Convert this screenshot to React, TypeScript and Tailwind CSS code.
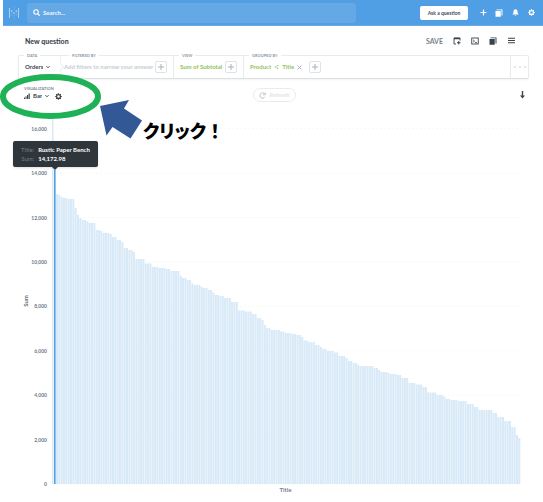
import type { ReactNode } from "react";

// Y axis runs from 0 to 16,000; 2,000 units are 44.4 chart units tall
const TICKS = [16000, 14000, 12000, 10000, 8000, 6000, 4000, 2000, 0];
const BASE = 366;
const yFor = (v: number) => BASE - (v * 44.4) / 2000;

// [start, top] of every step in the sorted bars
const STEPS: [number, number][] = [
  [56, 76], [58, 77], [60, 79], [63, 80], [66, 81], [73, 82], [75, 90], [77, 97], [79, 100],
  [82, 102], [86, 103], [89, 105], [94, 107], [96, 112], [100, 113], [103, 115], [110, 116],
  [112, 119], [117, 122], [120, 124], [123, 130], [127, 132], [132, 134], [135, 141],
  [143, 145.5], [152, 149], [157, 150], [164, 151], [170, 153], [178, 158], [181, 160],
  [187, 162], [190, 165.5], [194, 167], [199, 169], [202, 170], [208, 172], [211, 174.5],
  [214, 177], [218, 178], [224, 180], [230, 184], [237, 192.5], [244, 193.5], [251, 196],
  [256, 200], [261, 202], [263, 207], [266, 210], [269, 212], [279, 213.5], [285, 215],
  [292, 216], [296, 217], [300, 219], [303, 222.5], [308, 224], [314, 227], [319, 229],
  [322, 231], [326, 233], [333, 234.5], [338, 238], [344, 240], [347, 243], [352, 245],
  [356, 247], [360, 248], [373, 250], [377, 252], [380, 254], [386, 255], [389, 256],
  [397, 257], [402, 260], [409, 265], [416, 266.5], [421, 269], [427, 274.5], [437, 277],
  [442, 279], [445, 281], [449, 282], [458, 283], [467, 286], [473, 289], [479, 292],
  [491, 295], [496, 299], [503, 303], [510, 309], [515, 317], [518, 320],
];

const PITCH = 2.335;
const bars = Array.from({ length: 199 }, (_, i) => {
  const x = 56 + i * PITCH;
  const step = STEPS.filter(([start]) => start <= x + 0.5).pop()!;
  return { x, top: step[1] };
});

function Logo() {
  const bright = [
    [0, 0], [4, 0], [0, 1], [1, 1], [3, 1], [4, 1], [0, 2], [2, 2], [4, 2], [0, 3], [4, 3], [0, 4], [4, 4],
  ];
  const dim = [[2, 0], [1, 2], [3, 2], [2, 3], [1, 3], [3, 3], [2, 4], [2, -1], [2, 5]];
  return (
    <svg width="12" height="14" viewBox="0 0 12 14" fill="#fff" aria-hidden="true">
      {bright.map(([c, r]) => (
        <circle key={`b${c}${r}`} cx={1.5 + c * 2.25} cy={3 + r * 2} r="0.7" opacity="0.8" />
      ))}
      {dim.map(([c, r]) => (
        <circle key={`d${c}${r}`} cx={1.5 + c * 2.25} cy={3 + r * 2} r="0.6" opacity="0.3" />
      ))}
    </svg>
  );
}

function Gear({ className }: { className?: string }) {
  return (
    <svg viewBox="0 0 16 16" className={className} fill="none" stroke="currentColor" aria-hidden="true">
      <circle cx="8" cy="8" r="4.4" strokeWidth="2.8" />
      <path
        d="M8 .5v2.3M8 13.2v2.3M.5 8h2.3M13.2 8h2.3M2.7 2.7l1.7 1.7M11.6 11.6l1.7 1.7M2.7 13.3l1.7-1.7M11.6 4.4l1.7-1.7"
        strokeWidth="2.8"
      />
    </svg>
  );
}

function Chevron() {
  return (
    <svg width="4" height="4" viewBox="0 0 8 8" fill="none" stroke="currentColor" strokeWidth="2" aria-hidden="true">
      <path d="M1 2.5l3 3 3-3" />
    </svg>
  );
}

function Copies() {
  return (
    <svg width="8" height="8" viewBox="0 0 16 16" fill="currentColor" aria-hidden="true">
      <path d="M1 4h10.5v11.500H1z" />
      <path d="M3 .8h12v12h-2V2.500H3z" />
    </svg>
  );
}

function IconButton({ label, children }: { label: string; children: ReactNode }) {
  return (
    <button aria-label={label} className="flex size-2 items-center justify-center">
      {children}
    </button>
  );
}

function AddButton({ label }: { label: string }) {
  return (
    <button
      aria-label={label}
      className="flex size-3 shrink-0 items-center justify-center rounded-[2px] border border-[#dfe3e6] text-[#a9b2b9]"
    >
      <svg width="6" height="6" viewBox="0 0 6 6" stroke="currentColor" aria-hidden="true">
        <path d="M3 0v6M0 3h6" />
      </svg>
    </button>
  );
}

function Section({ label, htmlFor, className, children }: {
  label: string;
  htmlFor?: string;
  className?: string;
  children: ReactNode;
}) {
  const labelClass = "absolute -top-[3px] left-[5px] bg-white px-[3px] text-[4px] leading-[5px] font-bold whitespace-nowrap text-[#8b98a3]";
  return (
    <div className={`relative flex items-center ${className ?? ""}`}>
      {htmlFor ? (
        <label htmlFor={htmlFor} className={labelClass}>{label}</label>
      ) : (
        <span className={labelClass}>{label}</span>
      )}
      {children}
    </div>
  );
}

function NavBar() {
  return (
    <header className="ml-[3px] flex h-[26px] items-center border-b border-[#69aae5] bg-[#509ee3] pr-2 text-white">
      <a href="#" aria-label="Home" className="ml-[5px] mr-[7px]">
        <Logo />
      </a>
      <label className="flex h-5 w-[329px] min-w-0 items-center gap-[3px] rounded-[3px] bg-[#64a9e6] pl-[6px]">
        <svg width="7" height="7" viewBox="0 0 14 14" fill="none" stroke="#fff" strokeWidth="2.200" aria-hidden="true">
          <circle cx="6" cy="6" r="4.500" />
          <path d="M9.500 9.500l4 4" />
        </svg>
        <input
          type="text"
          aria-label="Search"
          placeholder="Search..."
          className="min-w-0 flex-1 bg-transparent text-[6px] leading-[8px] font-bold outline-none placeholder:text-white/90"
        />
      </label>
      <div className="ml-auto flex items-center gap-2">
        <button className="mr-[3px] h-[14px] w-12 rounded-[2px] bg-white text-[5px] leading-[8px] font-bold whitespace-nowrap text-[#3f4a5c]">
          Ask a question
        </button>
        <IconButton label="New">
          <svg width="7" height="7" viewBox="0 0 7 7" stroke="#fff" aria-hidden="true">
            <path d="M3.500 .5v6M.5 3.500h6" strokeWidth="1.200" />
          </svg>
        </IconButton>
        <IconButton label="Collections"><Copies /></IconButton>
        <IconButton label="Activity">
          <svg width="7" height="7" viewBox="0 0 14 14" fill="#fff" aria-hidden="true">
            <path d="M7 .5c-3 0-4 2.200-4 4.500 0 3-1 4.500-2.500 6h13C12 9.500 11 8 11 5c0-2.300-1-4.500-4-4.500zM5.500 12h3c0 1-.6 1.700-1.500 1.700S5.500 13 5.500 12z" />
          </svg>
        </IconButton>
        <IconButton label="Settings"><Gear className="size-[7px]" /></IconButton>
      </div>
    </header>
  );
}

function TitleRow() {
  return (
    <div className="flex h-[29px] items-center pr-7 pl-[25px]">
      <h1 className="text-[7px] leading-[10px] font-black text-[#3c464f]">New question</h1>
      <div className="ml-auto flex items-center gap-[10px] text-[#39434b]">
        <button className="text-[7px] leading-[10px] font-bold text-[#74838f]">SAVE</button>
        <IconButton label="Add to dashboard">
          <svg width="8" height="8" viewBox="0 0 16 16" fill="none" stroke="currentColor" strokeWidth="1.800" aria-hidden="true">
            <path d="M6 14H2V2h12v5" />
            <path d="M2 3h12" strokeWidth="3" />
            <path d="M11.500 8v7M8 11.500h7" strokeWidth="2" />
          </svg>
        </IconButton>
        <IconButton label="View SQL">
          <svg width="8" height="8" viewBox="0 0 16 16" fill="none" stroke="currentColor" strokeWidth="1.800" aria-hidden="true">
            <rect x="1.500" y="2" width="13" height="12" />
            <path d="M4.500 6l2.500 2-2.500 2M8 11.200h4" />
          </svg>
        </IconButton>
        <IconButton label="Data reference"><Copies /></IconButton>
        <IconButton label="Menu">
          <svg width="7" height="7" viewBox="0 0 14 14" stroke="currentColor" strokeWidth="2.200" aria-hidden="true">
            <path d="M0 2.500h14M0 7h14M0 11.500h14" />
          </svg>
        </IconButton>
      </div>
    </div>
  );
}

function QueryBar() {
  return (
    <div className="mr-[14px] ml-[18px] flex h-6 rounded-[2px] border border-[#e8eced] border-b-[#dce1e4] text-[6px] leading-[8px] font-bold whitespace-nowrap shadow-xs">
      <Section label="DATA" htmlFor="data" className="w-[41px] pl-[6px] text-[#3c464f]">
        <select id="data" className="appearance-none field-sizing-content bg-transparent pr-[3px] outline-none">
          <option>Orders</option>
        </select>
        <Chevron />
      </Section>
      <svg width="4" height="22" viewBox="0 0 4 22" fill="none" stroke="#e3e7e9" aria-hidden="true">
        <path d="M0 0v7l3.500 4L0 15v7" />
      </svg>
      <Section label="FILTERED BY" className="w-[110px] gap-[2px] border-r border-[#e8eced]">
        <button className="text-[#c6ccd1]">Add filters to narrow your answer</button>
        <AddButton label="Add filter" />
      </Section>
      <Section label="VIEW" className="w-[70px] gap-[3px] border-r border-[#e8eced] pl-[6px]">
        <button className="text-[#93bf62]">Sum of Subtotal</button>
        <AddButton label="Add metric" />
      </Section>
      <Section label="GROUPED BY" className="flex-1 gap-[3px] pl-[6px] text-[#93bf62]">
        <button>Product</button>
        <svg width="5" height="4" viewBox="0 0 8 8" fill="currentColor" aria-hidden="true">
          <circle cx="1.500" cy="4" r="1.200" />
          <circle cx="6.500" cy="1.200" r="1.200" />
          <circle cx="6.500" cy="6.800" r="1.200" />
          <path d="M1.500 4l5-2.800M1.500 4l5 2.800" stroke="currentColor" />
        </svg>
        <button>Title</button>
        <button aria-label="Remove grouping" className="mr-1 text-[#aab3ba]">
          <svg width="5" height="5" viewBox="0 0 5 5" stroke="currentColor" aria-hidden="true">
            <path d="M.5 .5l4 4M4.500 .5l-4 4" />
          </svg>
        </button>
        <AddButton label="Add grouping" />
      </Section>
      <button aria-label="More options" className="flex w-[18px] items-center justify-center border-l border-[#e8eced]">
        <svg width="12" height="2" viewBox="0 0 12 2" fill="#c2c9ce" aria-hidden="true">
          <circle cx="1" cy="1" r="0.800" />
          <circle cx="6" cy="1" r="0.800" />
          <circle cx="11" cy="1" r="0.800" />
        </svg>
      </button>
    </div>
  );
}

function VisualizationRow() {
  return (
    <div className="grid h-[39px] grid-cols-3 items-start pt-[7px] pr-[18px] pl-6">
      <div className="text-[#39434b]">
        <label htmlFor="viz" className="block text-[4px] leading-[5px] font-bold text-[#7b8994]">VISUALIZATION</label>
        <div className="flex items-center text-[6px] leading-[10px] font-bold">
          <svg width="6" height="6" viewBox="0 0 12 12" fill="currentColor" aria-hidden="true" className="mr-[3px]">
            <path d="M0 9h2v3H0zM3 6.500h2V12H3zM6 4h2v8H6zM9 1h2.500v11H9z" />
          </svg>
          <select id="viz" className="appearance-none field-sizing-content bg-transparent pr-[3px] outline-none">
            <option>Bar</option>
          </select>
          <Chevron />
          <button aria-label="Chart settings" className="ml-[6px]">
            <Gear className="size-[7px]" />
          </button>
        </div>
      </div>
      <button className="mt-[2px] flex h-[14px] w-[43px] items-center justify-center gap-[3px] justify-self-center rounded-full border border-[#e9ecee] text-[6px] leading-[8px] font-bold text-[#e1e5e8]">
        <svg width="7" height="7" viewBox="0 0 14 14" fill="none" stroke="#bcc4ca" strokeWidth="2" aria-hidden="true">
          <path d="M11.500 10A5.300 5.300 0 1 1 11 3.500M12.500 1v4.500H8" />
        </svg>
        Refresh
      </button>
      <button aria-label="Download" className="mt-[5px] justify-self-end text-[#39434b]">
        <svg width="5" height="8" viewBox="0 0 5 8" fill="currentColor" aria-hidden="true">
          <path d="M1.800 0h1.400v4.500H5L2.500 7.500 0 4.500h1.800z" />
        </svg>
      </button>
    </div>
  );
}

function Chart() {
  return (
    <div className="relative">
      <svg viewBox="0 0 543 384" className="block w-full font-bold" role="img" aria-label="Sum by Title">
        {TICKS.map((t) => (
          <g key={t}>
            <line x1="52" x2="520" y1={yFor(t)} y2={yFor(t)} stroke="#f5f7f8" strokeDasharray="2 2" />
            <text x="47" y={yFor(t) + 2} textAnchor="end" fontSize="5" fill="#6d7c88">
              {t.toLocaleString("en-US")}
            </text>
          </g>
        ))}
        {bars.map((b) => (
          <rect key={b.x} x={b.x} y={b.top} width="2" height={BASE - b.top} fill="#d8e9f7" />
        ))}
        <rect x="52" y="0" width="1.500" height={BASE} fill="#d8e9f8" />
        <rect x="54" y="52" width="1.600" height={BASE - 52} fill="#509ee3" />
        <text x="285.500" y="374" textAnchor="middle" fontSize="6" fill="#75838e">Title</text>
        <text transform="translate(28 183) rotate(-90)" textAnchor="middle" fontSize="6" fill="#5f6c77">Sum</text>
      </svg>

      <div className="absolute top-[23px] left-[13px] rounded-[2px] bg-[#2e353b] px-2 py-1 text-[6px] leading-[9px] whitespace-nowrap shadow-sm">
        <dl className="grid grid-cols-[auto_auto] gap-x-1">
          <dt className="text-right text-[#77818a]">Title:</dt>
          <dd className="font-bold text-white">Rustic Paper Bench</dd>
          <dt className="text-right text-[#77818a]">Sum:</dt>
          <dd className="font-bold text-white">14,172.98</dd>
        </dl>
        <svg width="6" height="3" viewBox="0 0 6 3" fill="#2e353b" aria-hidden="true" className="absolute top-full left-[39px]">
          <path d="M0 0h6L3 3z" />
        </svg>
      </div>
    </div>
  );
}

function Annotation() {
  return (
    <div className="pointer-events-none absolute top-[73px] left-0">
      <svg width="150" height="70" viewBox="0 73 150 70" aria-hidden="true">
        <ellipse cx="50.500" cy="96.500" rx="47.500" ry="19.500" fill="none" stroke="#1fb155" strokeWidth="6" />
        <path d="M100 106L129 100L124 108.500L142 120.500L130.500 138.500L112.500 127L106.500 135.500z" fill="#325896" />
      </svg>
      <p className="absolute top-[45px] left-[143px] font-['Noto_Sans_CJK_JP',sans-serif] text-[18px] leading-6 font-black whitespace-nowrap text-black">
        <span className="[font-feature-settings:'palt']">クリック</span>！
      </p>
    </div>
  );
}

export default function App() {
  return (
    <main className="relative min-h-screen overflow-hidden bg-white font-['Lato',sans-serif]">
      <NavBar />
      <TitleRow />
      <QueryBar />
      <VisualizationRow />
      <Chart />
      <Annotation />
    </main>
  );
}
